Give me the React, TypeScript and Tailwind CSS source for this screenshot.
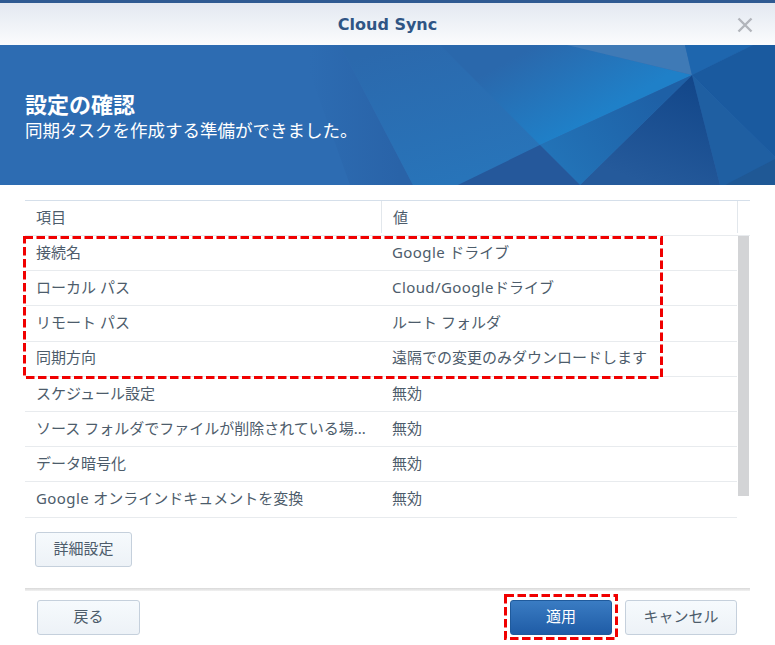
const font = { fontFamily: '"Noto Sans", "Noto Sans CJK JP", sans-serif' };

const rows = [
  ["接続名", "Google ドライブ"],
  ["ローカル パス", "Cloud/Googleドライブ"],
  ["リモート パス", "ルート フォルダ"],
  ["同期方向", "遠隔での変更のみダウンロードします"],
  ["スケジュール設定", "無効"],
  ["ソース フォルダでファイルが削除されている場...", "無効"],
  ["データ暗号化", "無効"],
  ["Google オンラインドキュメントを変換", "無効"],
];

function BannerArt() {
  return (
    <svg className="absolute inset-0 w-full h-full" viewBox="0 0 775 140" preserveAspectRatio="none">
      <defs>
        <linearGradient id="band" gradientUnits="userSpaceOnUse" x1="310" y1="0" x2="400" y2="0">
          <stop offset="0" stopColor="#2d6cb2" />
          <stop offset="1" stopColor="#2963a8" />
        </linearGradient>
        <linearGradient id="left" gradientUnits="userSpaceOnUse" x1="400" y1="0" x2="440" y2="140">
          <stop offset="0" stopColor="#2b69ad" />
          <stop offset="1" stopColor="#2874b9" />
        </linearGradient>
        <linearGradient id="bright" gradientUnits="userSpaceOnUse" x1="500" y1="20" x2="545" y2="100">
          <stop offset="0" stopColor="#2a68ac" />
          <stop offset="1" stopColor="#1f80c8" />
        </linearGradient>
        <linearGradient id="wedge" gradientUnits="userSpaceOnUse" x1="650" y1="40" x2="540" y2="130">
          <stop offset="0" stopColor="#1e60a6" />
          <stop offset="1" stopColor="#2376ba" />
        </linearGradient>
        <linearGradient id="deep" gradientUnits="userSpaceOnUse" x1="692" y1="30" x2="650" y2="140">
          <stop offset="0" stopColor="#124689" />
          <stop offset="1" stopColor="#255a9b" />
        </linearGradient>
      </defs>
      <polygon points="300,0 340,0 413,140 350,140" fill="url(#band)" />
      <polygon points="340,0 567,0 540,100 458,140 413,140" fill="url(#left)" />
      <polygon points="440,0 567,0 692,30 540,100" fill="url(#bright)" />
      <polygon points="567,0 685,0 692,30" fill="#3f7ab6" />
      <polygon points="685,0 753,0 692,30" fill="#1e66ae" />
      <polygon points="753,0 775,0 775,112 692,30" fill="#1a5a9f" />
      <polygon points="692,30 775,112 775,118 725,140 720,140" fill="#1f5fa2" />
      <polygon points="775,114 775,140 725,140" fill="#1f5895" />
      <polygon points="692,30 720,140 580,140" fill="url(#deep)" />
      <polygon points="692,30 580,140 540,100" fill="url(#wedge)" />
      <polygon points="540,100 580,140 458,140" fill="#25589b" />
    </svg>
  );
}

// latin text in the reference sets wider than the kana around it
function Cell({ text }: { text: string }) {
  const parts = text.split(/([A-Za-z/ ]{2,})/);
  return (
    <>
      {parts.map((p, i) =>
        /[A-Za-z]/.test(p) ? (
          <span key={i} className="tracking-[0.4px]">
            {p}
          </span>
        ) : (
          <span key={i}>{p}</span>
        )
      )}
    </>
  );
}

function Row({ label, value }: { label: string; value: string }) {
  return (
    <div className="flex h-[35.2px] items-center border-b border-[#e8ebee] pb-[2px] text-[15px] text-[#4d5c6b]">
      <div className="w-[356px] pl-[11px] whitespace-nowrap">
        <Cell text={label} />
      </div>
      <div className="pl-[11px] whitespace-nowrap">
        <Cell text={value} />
      </div>
    </div>
  );
}

// dashed annotation drawn by hand on the screenshot
function RedBox({ className, w, h }: { className: string; w: number; h: number }) {
  return (
    <svg className={`absolute ${className}`} width={w} height={h} viewBox={`0 0 ${w} ${h}`}>
      <rect x="1.5" y="1.5" width={w - 3} height={h - 3} fill="none" stroke="#f00000" strokeWidth="3" strokeDasharray="8.5 3.5" />
    </svg>
  );
}

export default function App() {
  return (
    <div className="relative w-[775px] h-[645px] bg-white overflow-hidden" style={font}>
      <div className="h-[3px] bg-[#2f5a92]" />
      <div className="relative flex h-[42px] items-center justify-center bg-gradient-to-b from-[#e3e8f1] to-[#fbfcfd] pt-[1px]">
        <span className="text-[16px] font-bold text-[#2f5585]" style={{ fontFamily: '"DejaVu Sans", sans-serif' }}>
          Cloud Sync
        </span>
        <svg className="absolute right-[22px] top-[14px]" width="16" height="16" viewBox="0 0 16 16">
          <path d="M1.5 1.5 L14.5 14.5 M14.5 1.5 L1.5 14.5" stroke="#b2b5bb" strokeWidth="2.4" />
        </svg>
      </div>

      <div className="relative h-[140px] bg-[#2d6cb2] overflow-hidden">
        <BannerArt />
        <div className="relative pl-[25px] pt-[47px] text-white">
          <h1 className="text-[22px] leading-[25px] font-bold">設定の確認</h1>
          <p className="text-[17.5px] leading-[26px]">同期タスクを作成する準備ができました。</p>
        </div>
      </div>

      <div className="mt-[15px] ml-[25px] w-[725px]">
        <div className="flex h-[36px] items-center border-t border-b border-t-[#d5dfea] border-b-[#e8ebee] pb-[2px] text-[15px] text-[#4d5c6b]">
          <div className="flex h-full w-[357px] items-center border-r border-[#e2e7ec] pl-[11px]">項目</div>
          <div className="flex h-full w-[356px] items-center border-r border-[#e2e7ec] pl-[11px]">値</div>
        </div>
        <div className="w-[712px]">
          {rows.map(([label, value]) => (
            <Row key={label} label={label} value={value} />
          ))}
        </div>

        <button className="mt-[14px] ml-[10px] block h-[35px] w-[97px] rounded-[3px] border border-[#c5d0dc] bg-gradient-to-b from-[#f6fafd] to-[#edf2f7] pb-[2px] text-[15px] text-[#4d5c6b]">
          詳細設定
        </button>
      </div>

      <div className="mt-[21px] ml-[25px] h-[3px] w-[725px] bg-gradient-to-b from-[#d8d8d8] to-[#f2f2f2]" />
      <div className="mt-[9px] flex w-[737px] pl-[37px]">
        <button className="h-[35px] w-[103px] rounded-[3px] border border-[#c5d0dc] bg-gradient-to-b from-[#f6fafd] to-[#edf2f7] pb-[2px] text-[15px] text-[#4d5c6b]">
          戻る
        </button>
        <button className="ml-auto h-[35px] w-[102px] rounded-[3px] border border-[#1f5a9c] bg-gradient-to-b from-[#3a7cc3] to-[#1f5ca6] pb-[2px] text-[15px] text-white">
          適用
        </button>
        <button className="ml-[13px] h-[35px] w-[112px] rounded-[3px] border border-[#c5d0dc] bg-gradient-to-b from-[#f6fafd] to-[#edf2f7] pb-[2px] text-[15px] text-[#4d5c6b]">
          キャンセル
        </button>
      </div>

      {/* scrollbar */}
      <div className="absolute left-[738px] top-[236px] h-[260px] w-[11px] bg-[#d3d4d6]" />

      <RedBox className="left-[23px] top-[236px]" w={640} h={143} />
      <RedBox className="left-[504px] top-[594px]" w={114} h={46} />
    </div>
  );
}
